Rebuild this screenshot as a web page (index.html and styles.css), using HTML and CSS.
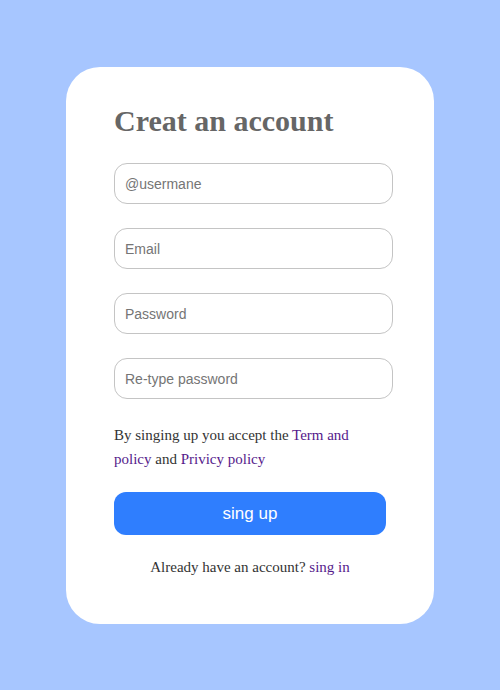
FILE: index.html
```html
<!DOCTYPE html>
<html>
<head>
<meta charset="utf-8">
<link rel="stylesheet" href="styles.css">
</head>
<body>
<div class="page">
  <form class="card">
    <h1 class="title">Creat an account</h1>
    <div class="fields">
      <input class="field" type="text" placeholder="@usermane">
      <input class="field" type="text" placeholder="Email">
      <input class="field" type="password" placeholder="Password">
      <input class="field" type="password" placeholder="Re-type password">
    </div>
    <p class="terms">By singing up you accept the <a class="link" href="#">Term and</a><br><a class="link" href="#">policy</a> and <a class="link" href="#">Privicy policy</a></p>
    <button class="btn" type="button">sing up</button>
    <p class="signin">Already have an account? <a class="link" href="#">sing in</a></p>
  </form>
</div>
</body>
</html>
```
FILE: styles.css
```css
html, body {
  margin: 0;
  padding: 0;
}
body {
  background: #a7c6ff;
  font-family: "Liberation Serif", "Times New Roman", serif;
}
.page {
  height: 690px;
  display: flex;
  align-items: center;
  justify-content: center;
}
.card {
  box-sizing: border-box;
  width: 368px;
  height: 557px;
  background: #ffffff;
  border-radius: 34px;
  padding: 37px 40px 0 48px;
  display: flex;
  flex-direction: column;
}
.title {
  margin: 0;
  font-size: 30px;
  line-height: 1.15;
  font-weight: bold;
  color: #666666;
}
.fields {
  margin-top: 25px;
  display: flex;
  flex-direction: column;
  gap: 24px;
}
.field {
  box-sizing: border-box;
  width: 279px;
  height: 41px;
  border: 1px solid #c4c4c4;
  border-radius: 13px;
  padding: 0 10px;
  font-family: "Liberation Sans", Arial, sans-serif;
  font-size: 14px;
  color: #333;
  outline: none;
  background: #fff;
}
.field::placeholder {
  color: #757575;
}
.terms {
  margin: 24px 0 0;
  font-size: 15px;
  line-height: 24px;
  color: #333333;
  width: 272px;
}
.link {
  color: #551a8b;
  text-decoration: none;
}
.btn {
  margin-top: 21px;
  width: 272px;
  height: 43px;
  border: none;
  border-radius: 12px;
  background: #2f7efe;
  color: #ffffff;
  font-family: "Liberation Sans", Arial, sans-serif;
  font-size: 17px;
  cursor: pointer;
}
.signin {
  margin: 20px 0 0;
  font-size: 15px;
  line-height: 24px;
  color: #333333;
  text-align: center;
  width: 272px;
}
```
